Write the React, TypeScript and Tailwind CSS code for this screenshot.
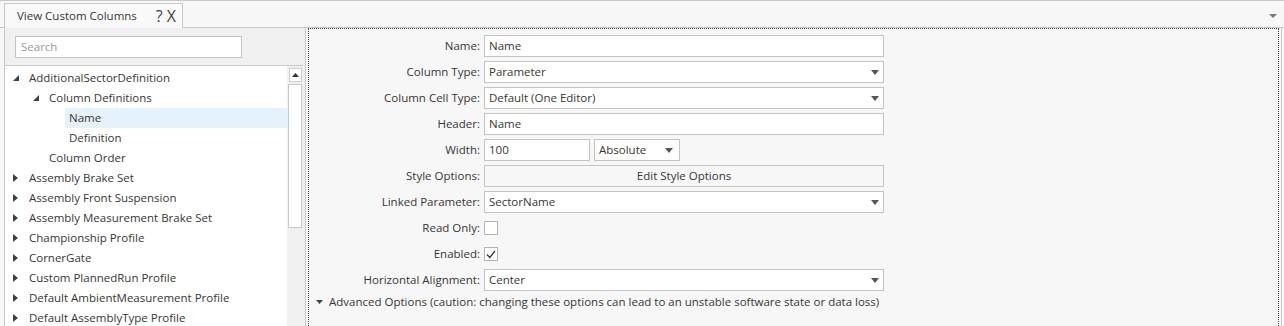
import React from "react";

type Node = { label: string; depth: number; arrow?: "open" | "closed"; selected?: boolean };

const tree: Node[] = [
  { label: "AdditionalSectorDefinition", depth: 0, arrow: "open" },
  { label: "Column Definitions", depth: 1, arrow: "open" },
  { label: "Name", depth: 2, selected: true },
  { label: "Definition", depth: 2 },
  { label: "Column Order", depth: 1 },
  { label: "Assembly Brake Set", depth: 0, arrow: "closed" },
  { label: "Assembly Front Suspension", depth: 0, arrow: "closed" },
  { label: "Assembly Measurement Brake Set", depth: 0, arrow: "closed" },
  { label: "Championship Profile", depth: 0, arrow: "closed" },
  { label: "CornerGate", depth: 0, arrow: "closed" },
  { label: "Custom PlannedRun Profile", depth: 0, arrow: "closed" },
  { label: "Default AmbientMeasurement Profile", depth: 0, arrow: "closed" },
  { label: "Default AssemblyType Profile", depth: 0, arrow: "closed" },
];

const pad = ["pl-[24px]", "pl-[44px]", "pl-[64px]"];
const arrowPad = ["left-[8px]", "left-[28px]", "left-[48px]"];

function Caret() {
  return (
    <svg width="8" height="5" viewBox="0 0 8 5" className="shrink-0">
      <path d="M0 0h8L4 5z" fill="#555" />
    </svg>
  );
}

function TreeArrow({ kind }: { kind: "open" | "closed" }) {
  if (kind === "open") {
    return (
      <svg width="6" height="6" viewBox="0 0 6 6">
        <path d="M6 0v6H0z" fill="#404040" />
      </svg>
    );
  }
  return (
    <svg width="5" height="8" viewBox="0 0 5 8">
      <path d="M0 0l5 4-5 4z" fill="#404040" />
    </svg>
  );
}

function Row({ label, children }: { label: string; children: React.ReactNode }) {
  return (
    <>
      <div className="flex h-[22px] items-center justify-end pr-[4px]">{label}:</div>
      <div className="flex h-[22px] items-center">{children}</div>
    </>
  );
}

function TextBox({ value, className = "w-[400px]" }: { value: string; className?: string }) {
  return (
    <div className={`flex h-[22px] items-center border border-[#c4c4c4] bg-white px-[4px] ${className}`}>{value}</div>
  );
}

function Combo({ value, className = "w-[400px]" }: { value: string; className?: string }) {
  return (
    <div
      className={`flex h-[22px] items-center justify-between border border-[#c4c4c4] bg-white pl-[4px] pr-[4px] ${className}`}
    >
      <span>{value}</span>
      <Caret />
    </div>
  );
}

function Check({ checked }: { checked?: boolean }) {
  return (
    <div className="flex h-[14px] w-[14px] items-center justify-center border border-[#b4b4b4] bg-white">
      {checked ? (
        <svg width="10" height="9" viewBox="0 0 10 9">
          <path d="M1 4.5l2.8 3L9 1" stroke="#333" strokeWidth="1.3" fill="none" />
        </svg>
      ) : null}
    </div>
  );
}

export default function App() {
  return (
    <div
      className="flex h-[326px] w-[1284px] flex-col overflow-hidden border-t border-[#c8c8c8] bg-[#f7f7f7] text-[11.5px] text-[#363636]"
      style={{ fontFamily: '"Open Sans", "Noto Sans", sans-serif' }}
    >
      {/* tab strip */}
      <div className="flex h-[27px] items-end justify-between border-b border-[#c8c8c8] pl-[4px] pr-[7px]">
        <div className="-mb-px flex h-[25px] w-[179px] items-center justify-between border border-b-0 border-[#c8c8c8] bg-[#f9f9f9] pl-[12px] pr-[6px]">
          <span>View Custom Columns</span>
          <span className="text-[16px] leading-none text-[#444]">? X</span>
        </div>
        <div className="mb-[9px]">
          <svg width="8" height="4" viewBox="0 0 8 4">
            <path d="M0 0h8L4 4z" fill="#777" />
          </svg>
        </div>
      </div>

      {/* body */}
      <div className="ml-[4px] mr-[2px] flex min-h-0 flex-1 border-x border-[#c8c8c8]">
        {/* left panel */}
        <div className="flex w-[298px] shrink-0 flex-col bg-[#f0f0f0]">
          <div className="h-[37px] shrink-0 pl-[10px] pt-[8px]">
            <div className="flex h-[22px] w-[227px] items-center border border-[#c4c4c4] bg-white px-[5px] text-[#999]">
              Search
            </div>
          </div>
          <div className="flex min-h-0 flex-1 border-t border-[#c8c8c8]">
            <div className="flex-1 bg-white pt-[2px]">
              {tree.map((n) => (
                <div
                  key={n.label + n.depth}
                  className={`relative flex h-[20px] items-center ${pad[n.depth]}`}
                >
                  {n.selected ? (
                    <div className="absolute inset-y-0 left-[60px] right-0 bg-[#e5f1fb]" />
                  ) : null}
                  {n.arrow ? (
                    <div className={`absolute top-0 flex h-[20px] items-center ${arrowPad[n.depth]}`}>
                      <TreeArrow kind={n.arrow} />
                    </div>
                  ) : null}
                  <span className="relative whitespace-nowrap">{n.label}</span>
                </div>
              ))}
            </div>
            <div className="flex w-[16px] shrink-0 flex-col items-center gap-[2px] bg-[#f0f0f0] pt-[2px]">
              <div className="flex h-[14px] w-[13px] items-center justify-center border border-[#d0d0d0] bg-white">
                <svg width="7" height="4" viewBox="0 0 7 4">
                  <path d="M0 4h7L3.5 0z" fill="#333" />
                </svg>
              </div>
              <div className="h-[144px] w-[14px] border border-[#c8c8c8] bg-white" />
            </div>
          </div>
        </div>

        {/* splitter */}
        <div className="w-[3px] shrink-0 border-r border-[#c8c8c8] bg-[#f0f0f0]" />

        {/* right panel */}
        <div className="min-w-0 flex-1 pl-[2px] pr-[2px]">
          <div className="h-full border-l border-t border-r border-dotted border-[#444] pt-[6px]">
            <div className="grid grid-cols-[175px_auto] gap-y-[4px]">
              <Row label="Name">
                <TextBox value="Name" />
              </Row>
              <Row label="Column Type">
                <Combo value="Parameter" />
              </Row>
              <Row label="Column Cell Type">
                <Combo value="Default (One Editor)" />
              </Row>
              <Row label="Header">
                <TextBox value="Name" />
              </Row>
              <Row label="Width">
                <div className="flex gap-[4px]">
                  <TextBox value="100" className="w-[106px]" />
                  <Combo value="Absolute" className="w-[86px] pr-[6px]" />
                </div>
              </Row>
              <Row label="Style Options">
                <div className="flex h-[22px] w-[400px] items-center justify-center border border-[#c4c4c4] bg-[#f7f7f7]">
                  Edit Style Options
                </div>
              </Row>
              <Row label="Linked Parameter">
                <Combo value="SectorName" />
              </Row>
              <Row label="Read Only">
                <Check />
              </Row>
              <Row label="Enabled">
                <Check checked />
              </Row>
              <Row label="Horizontal Alignment">
                <Combo value="Center" />
              </Row>
            </div>
            <div className="mt-[1px] flex h-[20px] items-center gap-[6px] pl-[7px]">
              <svg width="7" height="4" viewBox="0 0 7 4">
                <path d="M0 0h7L3.5 4z" fill="#444" />
              </svg>
              <span>Advanced Options (caution: changing these options can lead to an unstable software state or data loss)</span>
            </div>
          </div>
        </div>
      </div>
    </div>
  );
}
